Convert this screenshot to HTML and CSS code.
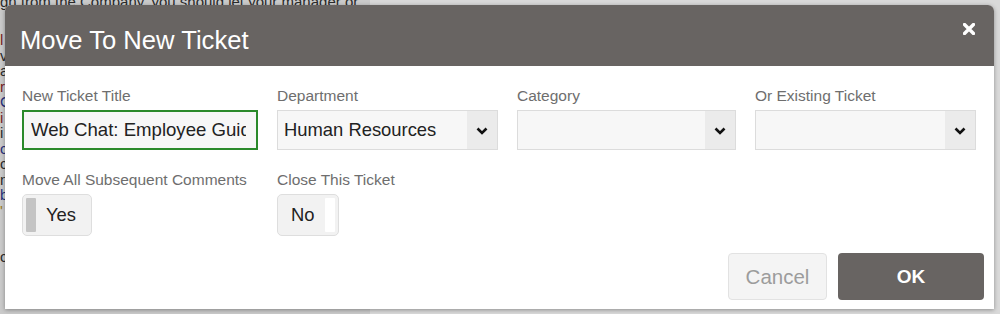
FILE: index.html
```html
<!DOCTYPE html>
<html lang="en">
<head>
    <meta charset="UTF-8">
    <title>Move To New Ticket</title>
    <link rel="stylesheet" href="styles.css">
</head>
<body>

    <div class="page">
        <div class="page-col">
            <p class="page-line">gn from the Company, you should let your manager or</p>
            <p class="page-text">
                <span class="red">l</span><br>
                <span>v</span><br>
                <span>a</span><br>
                <span class="red">r</span><br>
                <span class="blue">C</span><br>
                <span class="red">i</span><br>
                <span>i</span><br>
                <span class="blue">c</span><br>
                <span>c</span><br>
                <span>n</span><br>
                <span class="blue">b</span><br>
                <span class="gold">'</span><br>
                <span></span><br>
                <span></span><br>
                <span>c</span>
            </p>
        </div>
    </div>

    <section class="modal">
        <header class="modal-head">
            <h1>Move To New Ticket</h1>
            <button class="close" aria-label="Close">
                <svg width="12" height="12" viewBox="0 0 12 12">
                    <path d="M1.5 1.5 L10.5 10.5 M10.5 1.5 L1.5 10.5" stroke="#fff" stroke-width="3.4" stroke-linecap="round"/>
                </svg>
            </button>
        </header>

        <div class="modal-body">
            <div class="field-row">
                <label class="field">
                    <span class="field-label">New Ticket Title</span>
                    <input class="text-input" type="text" value="Web Chat: Employee Guidelines">
                </label>
                <label class="field">
                    <span class="field-label">Department</span>
                    <span class="select">
                        <span class="select-value">Human Resources</span>
                        <span class="select-arrow"><svg width="12" height="8" viewBox="0 0 12 8"><path d="M1.5 1.5 L6 6 L10.5 1.5" fill="none" stroke="#111" stroke-width="2.6"/></svg></span>
                    </span>
                </label>
                <label class="field">
                    <span class="field-label">Category</span>
                    <span class="select">
                        <span class="select-value"></span>
                        <span class="select-arrow"><svg width="12" height="8" viewBox="0 0 12 8"><path d="M1.5 1.5 L6 6 L10.5 1.5" fill="none" stroke="#111" stroke-width="2.6"/></svg></span>
                    </span>
                </label>
                <label class="field">
                    <span class="field-label">Or Existing Ticket</span>
                    <span class="select">
                        <span class="select-value"></span>
                        <span class="select-arrow"><svg width="12" height="8" viewBox="0 0 12 8"><path d="M1.5 1.5 L6 6 L10.5 1.5" fill="none" stroke="#111" stroke-width="2.6"/></svg></span>
                    </span>
                </label>
            </div>

            <div class="field-row second">
                <div class="field">
                    <span class="field-label">Move All Subsequent Comments</span>
                    <span class="toggle on"><span class="knob"></span>Yes</span>
                </div>
                <div class="field">
                    <span class="field-label">Close This Ticket</span>
                    <span class="toggle off">No<span class="knob"></span></span>
                </div>
            </div>

            <div class="buttons">
                <button class="btn btn-cancel">Cancel</button>
                <button class="btn btn-ok">OK</button>
            </div>
        </div>
    </section>

</body>
</html>
```

FILE: styles.css
```css
* {
    box-sizing: border-box;
}

body {
    margin: 0;
    height: 314px;
    overflow: hidden;
    background-color: #d9d9d9;
    font-family: "Liberation Sans", Arial, sans-serif;
}

/* page behind the dialog */
.page {
    height: 314px;
    display: flex;
}

.page-col {
    width: 370px;
    height: 100%;
    background-color: #cacaca;
    color: #2b2b2b;
    font-size: 15px;
}

.page-line {
    margin: -7px 0 0 0;
    white-space: nowrap;
    line-height: 17px;
}

.page-text {
    margin: 22px 0 0 0;
    line-height: 15.5px;
    font-size: 15px;
}

.red {
    color: #7a2222;
}

.blue {
    color: #26307a;
}

.gold {
    color: #9a7b20;
}

/* dialog */
.modal {
    position: absolute;
    left: 5px;
    top: 5px;
    width: 989px;
    height: 304px;
    background-color: #fff;
    border-radius: 6px 6px 0 0;
    box-shadow: 0 1px 4px rgba(0, 0, 0, .35);
    overflow: hidden;
}

.modal-head {
    height: 61px;
    background-color: #686462;
    display: flex;
    align-items: center;
    justify-content: space-between;
    padding: 0 19px 0 15px;
}

.modal-head h1 {
    margin: 10px 0 0 0;
    color: #fff;
    font-weight: normal;
    font-size: 25.6px;
}

.close {
    background: none;
    border: none;
    padding: 0;
    margin-top: -14px;
    display: flex;
}

.modal-body {
    padding: 21px 0 0 17px;
}

.field-row {
    display: grid;
    grid-template-columns: 236px 221px 219px 221px;
    column-gap: 19px;
}

.field-row.second {
    margin-top: 21px;
}

.field {
    display: flex;
    flex-direction: column;
    align-items: flex-start;
}

.field-label {
    color: #6e6e6e;
    font-size: 15.5px;
    line-height: 18px;
    margin-bottom: 5px;
    white-space: nowrap;
}

.text-input {
    width: 100%;
    height: 40px;
    border: 2px solid #2b8a2b;
    background-color: #f7f7f7;
    font-family: "Liberation Sans", Arial, sans-serif;
    font-size: 18.6px;
    color: #222;
    padding: 0 10px 0 7px;
    outline: none;
}

.select {
    width: 100%;
    height: 40px;
    border: 1px solid #dcdcdc;
    background-color: #f7f7f7;
    display: flex;
}

.select-value {
    flex: 1;
    font-size: 18.4px;
    color: #222;
    line-height: 38px;
    padding-left: 6px;
}

.select-arrow {
    width: 30px;
    background-color: #ebebeb;
    display: flex;
    align-items: center;
    justify-content: center;
    padding-top: 2px;
}

.toggle {
    height: 42px;
    border: 1px solid #dedede;
    border-radius: 5px;
    background-color: #f2f2f2;
    display: flex;
    align-items: center;
    font-size: 18.4px;
    color: #222;
    padding: 3px;
}

.toggle.on {
    width: 70px;
}

.toggle.off {
    width: 62px;
    padding-left: 13px;
}

.knob {
    width: 10px;
    height: 34px;
    border-radius: 1px;
}

.toggle.on .knob {
    background-color: #c4c4c4;
    margin-right: 10px;
}

.toggle.off .knob {
    background-color: #fff;
    margin-left: auto;
}

.buttons {
    display: flex;
    justify-content: flex-end;
    gap: 11px;
    margin-top: 17px;
    padding-right: 10px;
}

.btn {
    height: 47px;
    border-radius: 4px;
    font-family: "Liberation Sans", Arial, sans-serif;
    cursor: pointer;
}

.btn-cancel {
    width: 99px;
    background-color: #f4f4f4;
    border: 1px solid #e2e2e2;
    color: #9c9c9c;
    font-size: 20.5px;
}

.btn-ok {
    width: 146px;
    background-color: #686462;
    border: none;
    color: #fff;
    font-weight: bold;
    font-size: 19px;
}
```
